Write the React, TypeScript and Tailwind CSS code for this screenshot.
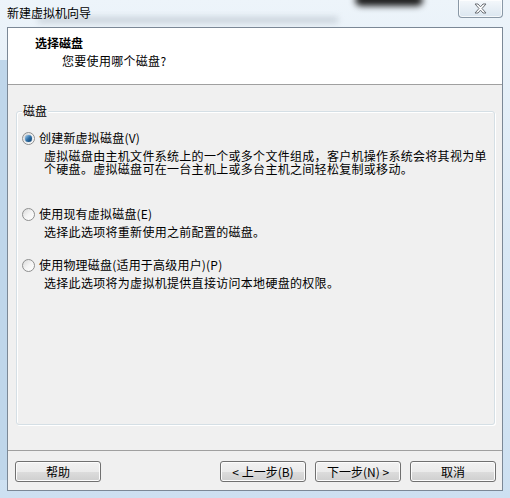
import React from 'react';

const FONT = { fontFamily: '"Noto Sans CJK SC", "Liberation Sans", sans-serif' };

function Radio({ checked }: { checked?: boolean }) {
  return (
    <span className="relative inline-block h-[13px] w-[13px] shrink-0 rounded-full border border-[#8e8f8f] bg-gradient-to-br from-[#d9d9d9] via-[#f4f4f4] to-white">
      {checked && (
        <span className="absolute left-[2px] top-[2px] h-[7px] w-[7px] rounded-full bg-gradient-to-br from-[#a6d4f5] via-[#2e6fa6] to-[#0b3d6a] shadow-[0_0_1px_#0d4a7d]" />
      )}
    </span>
  );
}

function Button({ children }: { children: React.ReactNode }) {
  return (
    <button className="flex h-[21px] w-[86px] items-center justify-center rounded-[3px] border border-[#707070] bg-[linear-gradient(#f2f2f2_0%,#ebebeb_50%,#dddddd_50%,#cfcfcf_100%)] text-[12px] leading-none text-black shadow-[inset_0_0_0_1px_#fcfcfc]">
      {children}
    </button>
  );
}

function Option({
  checked,
  label,
  lines,
  className,
}: {
  checked?: boolean;
  label: string;
  lines: string[];
  className?: string;
}) {
  return (
    <div className={className}>
      <div className="flex h-[16px] items-center gap-[4px]">
        <Radio checked={checked} />
        <span className="text-[12px] leading-[16px] tracking-[0.2px]">{label}</span>
      </div>
      <div className="mt-[3px] pl-[22px] text-[12px] leading-[13px] tracking-[0.3px]">
        {lines.map((l) => (
          <div key={l} className="whitespace-nowrap">
            {l}
          </div>
        ))}
      </div>
    </div>
  );
}

export default function App() {
  return (
    <div
      className="relative flex h-[498px] w-[510px] flex-col overflow-hidden bg-gradient-to-b from-[#edf4fa] via-[#d9e8f5] to-[#cde0f1] text-black"
      style={FONT}
    >
      {/* blurred glass background */}
      <div className="pointer-events-none absolute left-[355px] top-[-6px] h-[12px] w-[68px] rounded-full bg-[#1d1d1d] blur-[3px]" />
      <div className="pointer-events-none absolute left-[38px] top-[17px] h-[6px] w-[300px] bg-[#b9c3cc] opacity-70 blur-[3px]" />
      <div className="pointer-events-none absolute left-[0px] top-[60px] h-[420px] w-[7px] bg-[#bfd6ea]" />

      {/* title bar */}
      <div className="relative flex h-[27px] items-start pl-[7px] pt-[5px] text-[12px] leading-[16px]">
        新建虚拟机向导
        <div className="absolute right-[7px] top-0 flex h-[18px] w-[45px] items-center justify-center rounded-b-[4px] border border-t-0 border-[#8a98a6] bg-gradient-to-b from-[#f4f8fb] to-[#dbe6f0] shadow-[inset_0_0_0_1px_rgba(255,255,255,0.7)]">
          <svg width="13" height="11" viewBox="0 0 13 11">
            <path
              d="M1 1h3l2.5 2.8L9 1h3L8 5.5 12 10H9L6.5 7.2 4 10H1l4-4.5z"
              fill="#fff"
              stroke="#6a6f75"
              strokeWidth="1"
              strokeLinejoin="round"
            />
          </svg>
        </div>
      </div>

      {/* client area */}
      <div className="relative mx-[7px] flex h-[464px] flex-col border border-[#7b8896] bg-[#f0f0f0]">
        {/* header */}
        <div className="h-[57px] border-b border-[#a0a0a0] bg-white">
          <div className="pl-[27px] pt-[7px] text-[12px] font-bold leading-[16px]">选择磁盘</div>
          <div className="mt-[2px] pl-[54px] text-[12px] leading-[16px] tracking-[0.3px]">您要使用哪个磁盘?</div>
        </div>

        {/* body */}
        <div className="h-[365px] px-[8px] pr-[7px] pt-[26px]">
          <div className="relative h-[314px] rounded-[3px] border border-[#d5dfe5] shadow-[inset_1px_1px_0_#fff,1px_1px_0_#fff] pl-[5px] pt-[18px]">
            <span className="absolute left-[5px] top-[-9px] bg-[#f0f0f0] px-[1px] text-[12px] leading-[16px]">磁盘</span>
            <Option
              checked
              label="创建新虚拟磁盘(V)"
              lines={[
                '虚拟磁盘由主机文件系统上的一个或多个文件组成，客户机操作系统会将其视为单',
                '个硬盘。虚拟磁盘可在一台主机上或多台主机之间轻松复制或移动。',
              ]}
            />
            <Option
              className="mt-[31px]"
              label="使用现有虚拟磁盘(E)"
              lines={['选择此选项将重新使用之前配置的磁盘。']}
            />
            <Option
              className="mt-[19px]"
              label="使用物理磁盘(适用于高级用户)(P)"
              lines={['选择此选项将为虚拟机提供直接访问本地硬盘的权限。']}
            />
          </div>
        </div>

        {/* buttons */}
        <div className="flex h-[40px] items-start border-t border-[#a0a0a0] pl-[7px] pr-[6px] pt-[10px]">
          <Button>帮助</Button>
          <div className="flex-1" />
          <div className="flex gap-[9px]">
            <Button>&lt; 上一步(B)</Button>
            <Button>下一步(N) &gt;</Button>
            <Button>取消</Button>
          </div>
        </div>
      </div>

      <div className="h-[7px]" />
    </div>
  );
}
